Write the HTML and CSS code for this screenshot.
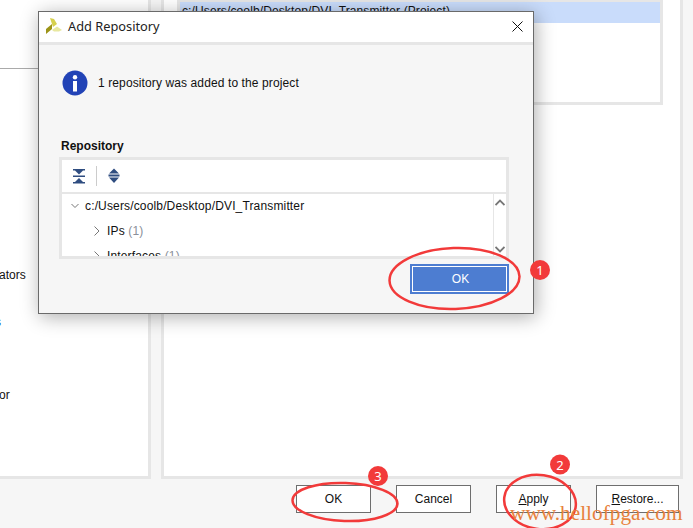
FILE: index.html
```html
<!DOCTYPE html>
<html lang="en">
<head>
<meta charset="utf-8">
<title>Add Repository</title>
<link rel="stylesheet" href="styles.css">
</head>
<body>
<div class="app">
  <div class="main">
    <div class="left">
      <div class="left-top"></div>
      <div class="nav-a">ators</div>
      <div class="nav-b">s</div>
      <div class="nav-c">or</div>
    </div>
    <div class="right">
      <div class="list">
        <div class="row-sel">c:/Users/coolb/Desktop/DVI_Transmitter (Project)</div>
      </div>
    </div>
  </div>
  <div class="footer">
    <button class="btn">OK</button>
    <button class="btn">Cancel</button>
    <button class="btn"><u>A</u>pply</button>
    <button class="btn btn-wide"><u>R</u>estore...</button>
  </div>
</div>

<div class="dialog">
  <div class="title">
    <svg class="logo" width="17" height="16" viewBox="0 0 17 16">
      <polygon points="0,11 6,6 6,11 0,16" fill="#9c9418"/>
      <polygon points="4,0 8,1 11,6 7,9" fill="#d6d04e"/>
      <polygon points="6,12 11,8.500 16,12 13,13.500 8,13.500" fill="#e8e8a0"/>
    </svg>
    <span class="title-text">Add Repository</span>
    <svg class="close" width="11" height="11" viewBox="0 0 11 11"><path d="M.5.5l10 10M10.5.5l-10 10" stroke="#111" fill="none"/></svg>
  </div>
  <div class="body">
    <div class="msg">
      <svg width="26" height="26" viewBox="0 0 26 26">
        <circle cx="13" cy="13" r="12.500" fill="#2243b6"/>
        <circle cx="13" cy="7.200" r="2.200" fill="#fff"/>
        <rect x="11" y="11" width="4" height="10.500" fill="#fff"/>
      </svg>
      <span class="msg-text">1 repository was added to the project</span>
    </div>
    <div class="label">Repository</div>
    <div class="box">
      <div class="toolbar">
        <svg class="tool" width="13" height="16" viewBox="0 0 13 16">
          <path d="M0 1h12v1.500H0zM2 2.500h8L6 6.500zM0 7.500h12V9H0zM6 10l4 4H2zM0 14h12v1.500H0z" fill="#2f4d80"/>
        </svg>
        <span class="tool-sep"></span>
        <svg class="tool" width="13" height="16" viewBox="0 0 13 16">
          <path d="M6 .5L11 5.500H1zM.5 6.500h11v2H.5zM1 9.500h10L6 15z" fill="#2f4d80"/>
        </svg>
      </div>
      <div class="tree">
        <div class="tree-list">
          <div class="node node-root">
            <svg class="chev" width="8" height="8" viewBox="0 0 8 8"><path d="M.5 2l3.500 3.500L7.500 2" stroke="#777" fill="none"/></svg>
            <span class="node-text">c:/Users/coolb/Desktop/DVI_Transmitter</span>
          </div>
          <div class="node node-child">
            <svg class="chev" width="6" height="10" viewBox="0 0 6 10"><path d="M.5.5L5 5 .5 9.500" stroke="#777" fill="none"/></svg>
            <span class="node-text">IPs <span class="count">(1)</span></span>
          </div>
          <div class="node node-child">
            <svg class="chev" width="6" height="10" viewBox="0 0 6 10"><path d="M.5.5L5 5 .5 9.500" stroke="#777" fill="none"/></svg>
            <span class="node-text">Interfaces <span class="count">(1)</span></span>
          </div>
        </div>
        <div class="scroll">
          <svg width="10" height="7" viewBox="0 0 10 7"><path d="M.5 6L5 1.500 9.500 6" stroke="#777" stroke-width="1.800" fill="none"/></svg>
          <svg width="10" height="7" viewBox="0 0 10 7"><path d="M.5 1L5 5.500 9.500 1" stroke="#777" stroke-width="1.800" fill="none"/></svg>
        </div>
      </div>
    </div>
    <div class="dlg-actions"><button class="btn-primary">OK</button></div>
  </div>
</div>

<svg class="marks" width="693" height="528" viewBox="0 0 693 528">
  <g fill="none" stroke="#f23a3a" stroke-width="2.500">
    <ellipse cx="454.500" cy="278.500" rx="65" ry="30.500" transform="rotate(-2 454.500 278.500)"/>
    <ellipse cx="345" cy="502" rx="52.500" ry="19" transform="rotate(2 345 502)"/>
    <ellipse cx="540" cy="502" rx="36" ry="27" transform="rotate(8 540 502)"/>
  </g>
  <g fill="#f23a3a">
    <circle cx="540" cy="270" r="10"/>
    <circle cx="560" cy="464.500" r="10"/>
    <circle cx="378" cy="476" r="10"/>
  </g>
  <g class="badge-num" fill="#fff" text-anchor="middle">
    <text x="540" y="275">1</text>
    <text x="560" y="469.500">2</text>
    <text x="378" y="481">3</text>
  </g>
</svg>
<div class="watermark">www.hellofpga.com</div>
</body>
</html>
```
FILE: styles.css
```css
* { box-sizing: border-box; }
html, body { margin: 0; height: 528px; overflow: hidden; }
body {
  position: relative;
  width: 693px;
  background: #f6f6f6;
  font-family: "Liberation Sans", Arial, sans-serif;
  font-size: 12px;
  color: #111;
}
.app { display: flex; flex-direction: column; height: 528px; }
.main { display: flex; height: 479px; gap: 10px; }

.left {
  width: 151px;
  background: #fff;
  border-right: 3px solid #e6e6e6;
  border-bottom: 3px solid #e6e6e6;
}
.left-top { height: 69px; border-bottom: 1px solid #aaa; }
.nav-a { margin: 199px 0 0 -1px; line-height: 14px; }
.nav-b { margin: 33px 0 0 -5px; line-height: 14px; color: #0b55b5; }
.nav-c { margin: 59px 0 0 -1px; line-height: 14px; }

.right {
  width: 522px;
  background: #fff;
  border-left: 3px solid #e6e6e6;
  border-right: 3px solid #e6e6e6;
  border-bottom: 3px solid #e6e6e6;
  padding-left: 13px;
}
.list {
  width: 486px;
  height: 105px;
  border: 3px solid #e6e6e6;
  border-top-width: 2px;
}
.row-sel {
  height: 21px;
  background: #c9dcfb;
  padding-left: 2px;
  line-height: 19px;
  letter-spacing: .12px;
  white-space: nowrap;
}

.footer { display: flex; gap: 25px; padding: 6px 0 0 296px; }
.btn {
  width: 75px;
  height: 28px;
  padding: 0;
  border: 1px solid #6e6e6e;
  background: #fff;
  color: #111;
  font: 12px "Liberation Sans", Arial, sans-serif;
}
.btn-wide { width: 83px; }

.dialog {
  position: absolute;
  left: 38px;
  top: 11px;
  width: 496px;
  height: 303px;
  display: flex;
  flex-direction: column;
  border: 1px solid #6a6a6a;
  background: #f6f6f6;
  box-shadow: 2px 3px 18px rgba(0, 0, 0, .32);
}
.title {
  display: flex;
  align-items: center;
  height: 33px;
  padding: 0 10px 2px 7px;
  flex: none;
  background: #fff;
  border-bottom: 3px solid #e6e6e6;
}
.logo { flex: none; }
.title-text {
  margin-left: 5px;
  font-family: "Noto Sans", sans-serif;
  font-size: 12.800px;
  color: #222;
}
.close { margin-left: auto; }
.body { flex: 1; padding: 25px 24px 0 20px; }
.msg { display: flex; align-items: center; gap: 10px; padding-left: 3px; }
.msg-text { letter-spacing: .11px; }
.label { margin: 43px 0 0 2px; font-weight: 700; line-height: 14px; }
.box {
  width: 450px;
  height: 102px;
  margin-top: 4px;
  border: 3px solid #e6e6e6;
  background: #fff;
}
.toolbar {
  display: flex;
  align-items: center;
  height: 34px;
  padding-left: 11px;
  border-bottom: 2px solid #e6e6e6;
}
.tool { flex: none; }
.tool-sep { width: 1px; height: 20px; margin: 0 11px 0 10px; background: #ccc; }
.tree { display: flex; height: 62px; overflow: hidden; }
.tree-list { flex: 1; }
.node { display: flex; align-items: center; height: 25.500px; white-space: nowrap; }
.node-root { padding-left: 9px; height: 24px; }
.node-root .chev { margin-right: 6px; }
.node-child { padding-left: 32px; }
.node-child .chev { margin-right: 7px; }
.node-text { letter-spacing: .15px; }
.count { color: #8a8f9a; }
.scroll {
  display: flex;
  flex: none;
  flex-direction: column;
  align-items: center;
  justify-content: space-between;
  width: 13px;
  padding: 5px 0 3px;
  border-left: 1px solid #e6e6e6;
}
.dlg-actions { display: flex; justify-content: flex-end; margin-top: 5px; }
.btn-primary {
  width: 99px;
  height: 30px;
  padding: 0 0 0 2px;
  border: 2px solid #4d7dd1;
  outline: 1px solid #fff;
  outline-offset: -3px;
  background: #4d7dd1;
  color: #fff;
  font: 12px "Liberation Sans", Arial, sans-serif;
}

.marks { position: absolute; left: 0; top: 0; pointer-events: none; }
.badge-num { font: 400 13px "Noto Sans", sans-serif; }
.watermark {
  position: absolute;
  left: 510px;
  top: 501px;
  font-family: "Liberation Serif", serif;
  font-size: 21.300px;
  line-height: 24px;
  color: #e8813c;
  white-space: nowrap;
}
```
